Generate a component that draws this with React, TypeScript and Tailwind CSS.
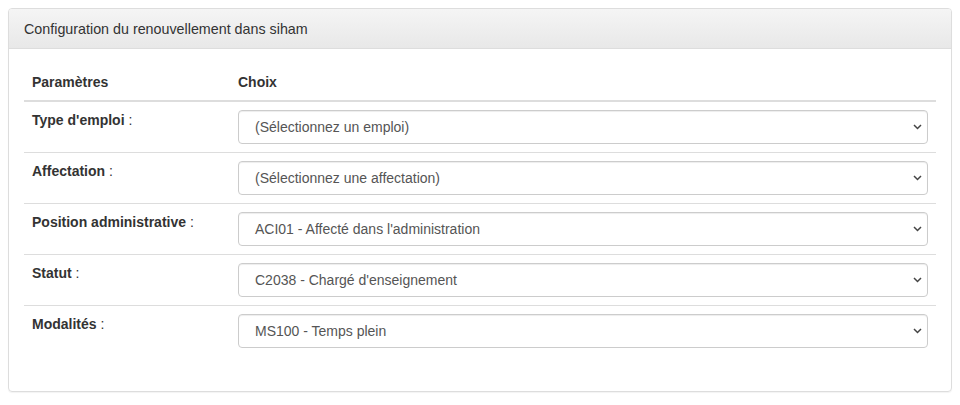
import React from 'react';

type Row = { label: string; value: string };

const rows: Row[] = [
  { label: "Type d'emploi", value: '(Sélectionnez un emploi)' },
  { label: 'Affectation', value: '(Sélectionnez une affectation)' },
  { label: 'Position administrative', value: "ACI01 - Affecté dans l'administration" },
  { label: 'Statut', value: "C2038 - Chargé d'enseignement" },
  { label: 'Modalités', value: 'MS100 - Temps plein' },
];

const Chevron = () => (
  <svg width="9" height="6" viewBox="0 0 9 6" className="text-[#444]">
    <path d="M1 1l3.5 3.5L8 1" fill="none" stroke="currentColor" strokeWidth="1.5" />
  </svg>
);

const FakeSelect: React.FC<{ value: string }> = ({ value }) => (
  <div className="flex h-[34px] items-center justify-between rounded-[4px] border border-[#ccc] bg-white pl-4 pr-[5px] text-[14px] text-[#555] shadow-[inset_0_1px_1px_rgba(0,0,0,0.075)]">
    <span>{value}</span>
    <Chevron />
  </div>
);

export default function App() {
  return (
    <div className="bg-white p-2 font-['Liberation_Sans',sans-serif] text-[14px] leading-5 text-[#333]">
      <div className="overflow-hidden rounded-[4px] border border-[#ddd] shadow-[0_1px_1px_rgba(0,0,0,0.05)]">
        <div className="flex h-10 items-center border-b border-[#ddd] bg-gradient-to-b from-[#f5f5f5] to-[#e8e8e8] px-[15px] text-[14.3px]">
          Configuration du renouvellement dans siham
        </div>
        <div className="p-[15px]">
          <table className="mb-5 w-full border-collapse">
            <thead>
              <tr className="border-b-2 border-[#ddd]">
                <th className="w-[206px] p-2 text-left font-bold">Paramètres</th>
                <th className="p-2 text-left font-bold">Choix</th>
              </tr>
            </thead>
            <tbody>
              {rows.map((r, i) => (
                <tr key={r.label} className={i > 0 ? 'border-t border-[#ddd]' : ''}>
                  <td className="p-2 align-top">
                    <span className="font-bold">{r.label}</span> :
                  </td>
                  <td className="p-2">
                    <FakeSelect value={r.value} />
                  </td>
                </tr>
              ))}
            </tbody>
          </table>
        </div>
      </div>
    </div>
  );
}
